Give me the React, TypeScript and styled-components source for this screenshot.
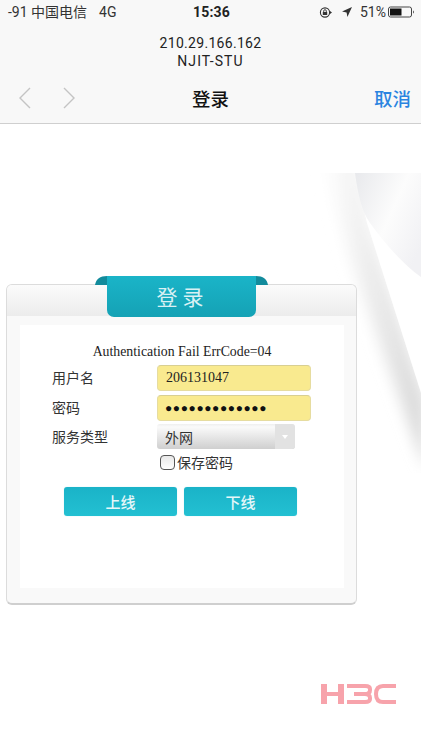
import React from "react";
import styled, { createGlobalStyle } from "styled-components";

const Global = createGlobalStyle`
  html, body { margin: 0; padding: 0; background: #fff; }
  #root { width: 421px; height: 750px; overflow: hidden; }
`;

const UI = `Roboto, "Liberation Sans", "Noto Sans CJK SC", sans-serif`;
const CJK = `"Noto Sans CJK SC", "Liberation Sans", sans-serif`;

const Page = styled.div`
  position: relative;
  width: 421px;
  height: 750px;
  overflow: hidden;
  background: #fff;
  font-family: ${UI};
`;

const TopBar = styled.header`
  height: 123px;
  background: #f8f8f8;
  border-bottom: 1px solid #cfcfcf;
  display: flex;
  flex-direction: column;
  color: #1c1c1c;
`;

const StatusBar = styled.div`
  height: 24px;
  display: grid;
  grid-template-columns: 1fr auto 1fr;
  align-items: center;
  padding: 0 6px 0 8px;
  font-size: 14px;
  line-height: 16px;
`;

const Carrier = styled.div`
  display: flex;
  align-items: baseline;
  gap: 12px;
  height: 16px;
  color: #333;
`;

const CarrierText = styled.span`
  display: block;
  line-height: 16px;
  height: 16px;
`;

const Clock = styled.div`
  font-weight: 700;
  font-size: 14px;
  letter-spacing: 0.2px;
  color: #222;
`;

const StatusRight = styled.div`
  display: flex;
  justify-content: flex-end;
  align-items: center;
  gap: 6px;
  color: #333;
`;

const Address = styled.div`
  margin-top: 10px;
  text-align: center;
  font-size: 14px;
  line-height: 18px;
  letter-spacing: 0.3px;
  color: #222;
`;

const Network = styled.span`
  display: block;
  letter-spacing: 1.1px;
`;

const NavRow = styled.nav`
  flex: 1;
  display: grid;
  grid-template-columns: 1fr auto 1fr;
  align-items: center;
  padding: 3px 10px 0;
`;

const NavArrows = styled.div`
  display: flex;
  gap: 32px;
  align-items: center;
  margin-left: 8px;
`;

const NavTitle = styled.div`
  font-family: ${CJK};
  font-size: 18.5px;
  font-weight: 500;
  color: #111;
`;

const Cancel = styled.div`
  font-family: ${CJK};
  font-size: 18.5px;
  font-weight: 500;
  color: #2a84e0;
  text-align: right;
`;

const Curl = styled.svg`
  position: absolute;
  left: 300px;
  top: 173px;
`;

const Body = styled.main`
  position: relative;
  padding: 160px 0 0 6px;
`;

const Card = styled.section`
  position: relative;
  width: 349px;
  height: 318px;
  background: #f9f9f9;
  border: 1px solid #dcdcdc;
  border-bottom: 2px solid #cfcfcf;
  border-radius: 6px;
  box-sizing: content-box;
`;

const CardHead = styled.div`
  height: 31px;
  border-radius: 5px 5px 0 0;
  background: linear-gradient(#fbfbfb, #ececec);
`;

const Ribbon = styled.svg`
  position: absolute;
  left: 88px;
  top: -9px;
`;

const Tab = styled.div`
  position: absolute;
  left: 100px;
  top: -9px;
  width: 149px;
  height: 41px;
  border-radius: 0 0 7px 7px;
  background: linear-gradient(#1ab4c8, #15a2b5);
  color: #d9f1f4;
  font-family: ${CJK};
  font-size: 21px;
  letter-spacing: 5px;
  text-indent: 2px;
  padding-bottom: 1px;
  box-sizing: border-box;
  display: flex;
  align-items: center;
  justify-content: center;
`;

const Inner = styled.div`
  margin: 9px 12px 0 13px;
  height: 263px;
  background: #fff;
  padding: 18px 0 0 32px;
  box-sizing: border-box;
`;

const Message = styled.div`
  width: 260px;
  text-align: center;
  font-family: "Liberation Serif", serif;
  font-size: 13.8px;
  line-height: 18px;
  color: #222;
  margin-bottom: 4px;
`;

const Form = styled.div`
  display: grid;
  grid-template-columns: 105px 154px;
  align-items: center;
  row-gap: 4px;
`;

const Label = styled.div`
  font-family: ${CJK};
  font-size: 14px;
  line-height: 20px;
  color: #333;
  padding-bottom: 3px;
`;

const TextField = styled.div`
  height: 26px;
  box-sizing: border-box;
  background: #f9ea8f;
  border: 1px solid #e6dca0;
  border-top-color: #d8cf92;
  border-radius: 4px;
  padding-left: 8px;
  display: flex;
  align-items: center;
  font-family: "Liberation Serif", serif;
  font-size: 14px;
  color: #222;
`;

const Dots = styled.span`
  font-family: "Liberation Sans", sans-serif;
  font-size: 12px;
  letter-spacing: 0.6px;
  color: #111;
  margin-left: -1px;
`;

const Select = styled.div`
  width: 138px;
  height: 25px;
  margin-top: -1px;
  border-radius: 3px;
  background: linear-gradient(#efefef, #fafafa 12%, #cfcfcf);
  display: flex;
  align-items: center;
  justify-content: space-between;
  padding-left: 8px;
  box-sizing: border-box;
  font-family: ${CJK};
  font-size: 14px;
  line-height: 20px;
  color: #333;
`;

const SelectArrow = styled.div`
  width: 20px;
  height: 25px;
  border-radius: 0 3px 3px 0;
  background: #e2e2e2;
  display: flex;
  align-items: center;
  justify-content: center;
  &::after {
    content: "";
    border-left: 3px solid transparent;
    border-right: 3px solid transparent;
    border-top: 4px solid #fff;
  }
`;

const Remember = styled.div`
  grid-column: 2;
  display: flex;
  align-items: center;
  gap: 2px;
  padding-left: 3px;
  height: 18px;
  font-family: ${CJK};
  font-size: 14px;
  color: #333;
`;

const Check = styled.span`
  width: 15px;
  height: 15px;
  box-sizing: border-box;
  border: 1px solid #555;
  border-radius: 4px;
  background: linear-gradient(#e8e8e8, #fff);
`;

const Actions = styled.div`
  display: flex;
  gap: 7px;
  margin: 16px 0 0 12px;
`;

const ActionButton = styled.div`
  width: 113px;
  height: 29px;
  border-radius: 3px;
  background: linear-gradient(#1ab3c8, #23c0d2);
  color: #e6f7f9;
  font-family: ${CJK};
  font-size: 15px;
  font-weight: 500;
  display: flex;
  align-items: center;
  justify-content: center;
  box-shadow: 0 0 1px #9fdbe4;
`;

const Footer = styled.footer`
  display: flex;
  justify-content: flex-end;
  padding: 79px 24px 0 0;
  margin-left: -6px;
`;

export default function App() {
  return (
    <Page>
      <Global />
      <TopBar>
        <StatusBar>
          <Carrier>
            <CarrierText>-91 中国电信</CarrierText>
            <CarrierText>4G</CarrierText>
          </Carrier>
          <Clock>15:36</Clock>
          <StatusRight>
            <svg width="14" height="13" viewBox="0 0 14 13">
              <circle cx="6" cy="6.5" r="4.6" fill="none" stroke="#333" strokeWidth="1.1" />
              <rect x="3.8" y="6" width="4.4" height="3" fill="#333" />
              <path d="M4.7 6V5a1.3 1.3 0 0 1 2.6 0v1" fill="none" stroke="#333" strokeWidth=".9" />
              <path d="M11 5l2 1.5L11 8z" fill="#333" />
            </svg>
            <svg width="12" height="12" viewBox="0 0 12 12" style={{ marginLeft: 2 }}>
              <path d="M11 1L1 5.6l4.6.8.8 4.6z" fill="#333" />
            </svg>
            <span style={{ marginLeft: 1 }}>51%</span>
            <svg width="27" height="12" viewBox="0 0 27 12" style={{ marginLeft: -4 }}>
              <rect x=".5" y="1" width="23" height="10" rx="2" fill="none" stroke="#444" />
              <rect x="2" y="2.5" width="11.5" height="7" fill="#111" />
              <path d="M25 4.5c1 .3 1.3 2.7 0 3z" fill="#444" />
            </svg>
          </StatusRight>
        </StatusBar>
        <Address>
          210.29.166.162
          <Network>NJIT-STU</Network>
        </Address>
        <NavRow>
          <NavArrows>
            <svg width="13" height="22" viewBox="0 0 13 22">
              <path d="M12 1L2 11l10 10" fill="none" stroke="#c4c4c4" strokeWidth="1.4" />
            </svg>
            <svg width="13" height="22" viewBox="0 0 13 22">
              <path d="M1 1l10 10L1 21" fill="none" stroke="#c4c4c4" strokeWidth="1.4" />
            </svg>
          </NavArrows>
          <NavTitle>登录</NavTitle>
          <Cancel>取消</Cancel>
        </NavRow>
      </TopBar>
      <Curl width="121" height="300" viewBox="0 3 121 300">
        <defs>
          <linearGradient id="shade" x1="0" x2="1" y1="0" y2="0">
            <stop offset="0" stopColor="#ffffff" />
            <stop offset="1" stopColor="#d9d9d9" />
          </linearGradient>
          <linearGradient id="fold" x1="0" y1="0" x2="1" y2="0.7">
            <stop offset="0" stopColor="#e8e9ec" />
            <stop offset="0.55" stopColor="#fcfcfc" />
            <stop offset="1" stopColor="#f1f1f4" />
          </linearGradient>
          <filter id="soft" x="-30%" y="-10%" width="160%" height="120%">
            <feGaussianBlur stdDeviation="7" />
          </filter>
        </defs>
        <path
          d="M22 -10H56L68 53L125 230V300L85 190L50 90z"
          fill="url(#shade)"
          filter="url(#soft)"
        />
        <path d="M55 0L67 53L121 223V0z" fill="#fff" />
        <path d="M55 3C58 25 62 42 70 53C85 74 105 96 121 107V3z" fill="url(#fold)" />
      </Curl>
      <Body>
        <Card>
          <CardHead />
          <Ribbon width="173" height="9" viewBox="0 0 173 9">
            <path d="M0 9C1 3 5 0 12 0H161C168 0 172 3 173 9H160V7H13V9z" fill="#128b9c" />
          </Ribbon>
          <Tab>登录</Tab>
          <Inner>
            <Message>Authentication Fail ErrCode=04</Message>
            <Form>
              <Label>用户名</Label>
              <TextField>206131047</TextField>
              <Label>密码</Label>
              <TextField>
                <Dots>●●●●●●●●●●●●●</Dots>
              </TextField>
              <Label>服务类型</Label>
              <Select>
                外网
                <SelectArrow />
              </Select>
              <Remember>
                <Check />
                保存密码
              </Remember>
            </Form>
            <Actions>
              <ActionButton>上线</ActionButton>
              <ActionButton>下线</ActionButton>
            </Actions>
          </Inner>
        </Card>
        <Footer>
          <svg width="76" height="20" viewBox="0 0 76 20" fill="none" stroke="#f7a3ab">
            <path d="M3 0v20M20 0v20" strokeWidth="6" />
            <path d="M3 10h17" strokeWidth="4" />
            <path d="M26 2h18q5 0 5 3v1q0 4-5 4H33M44 10q5 0 5 4v1q0 3-5 3H26" strokeWidth="4" />
            <path d="M75 2H62q-7 0-7 8t7 8h13" strokeWidth="4" />
          </svg>
        </Footer>
      </Body>
    </Page>
  );
}
